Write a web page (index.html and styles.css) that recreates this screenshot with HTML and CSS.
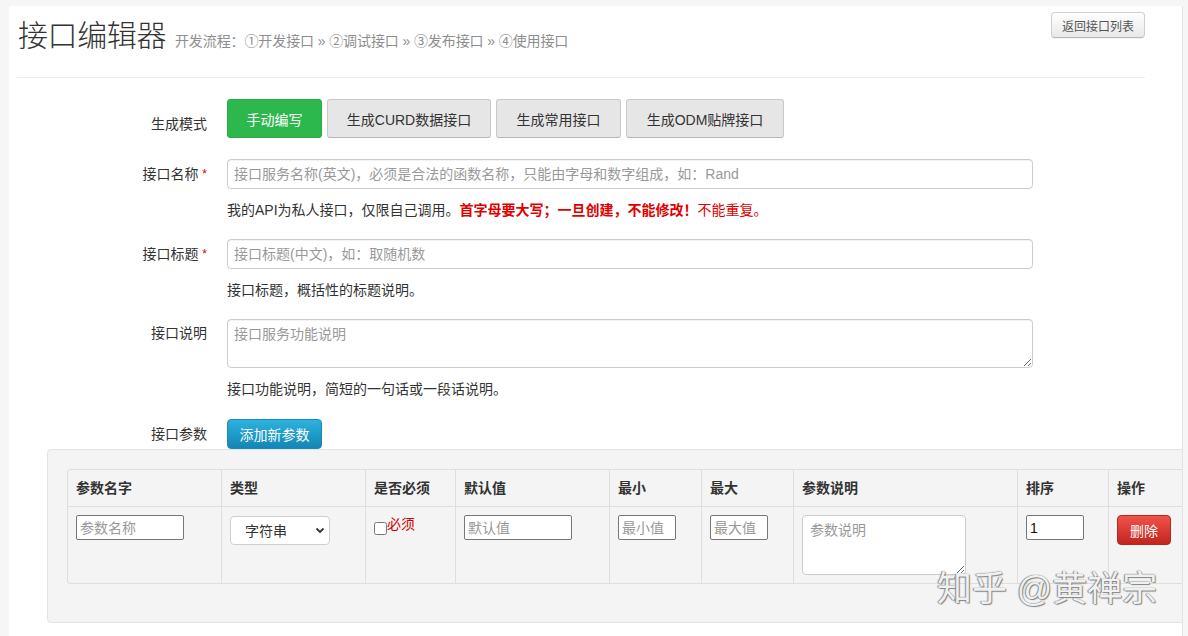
FILE: index.html
```html
<!DOCTYPE html>
<html lang="zh-CN">
<head>
<meta charset="utf-8">
<title>接口编辑器</title>
<link rel="stylesheet" href="styles.css">
</head>
<body>
<div class="page">
  <div class="container">
    <div class="header">
      <h1 class="title">接口编辑器 <small class="subtitle">开发流程：①开发接口 » ②调试接口 » ③发布接口 » ④使用接口</small></h1>
      <button class="btn-back">返回接口列表</button>
    </div>

    <div class="form">
      <div class="row row-mode">
        <div class="label label-mode">生成模式</div>
        <div class="controls btn-group">
          <button class="btn btn-green">手动编写</button>
          <button class="btn btn-gray">生成CURD数据接口</button>
          <button class="btn btn-gray">生成常用接口</button>
          <button class="btn btn-gray">生成ODM贴牌接口</button>
        </div>
      </div>

      <div class="row row-field">
        <div class="label">接口名称 <span class="req">*</span></div>
        <div class="controls">
          <input class="text-input" type="text" placeholder="接口服务名称(英文)，必须是合法的函数名称，只能由字母和数字组成，如：Rand">
          <p class="help">我的API为私人接口，仅限自己调用。<b class="warn">首字母要大写；一旦创建，不能修改！</b><span class="warn-light">不能重复。</span></p>
        </div>
      </div>

      <div class="row row-field">
        <div class="label">接口标题 <span class="req">*</span></div>
        <div class="controls">
          <input class="text-input" type="text" placeholder="接口标题(中文)，如：取随机数">
          <p class="help">接口标题，概括性的标题说明。</p>
        </div>
      </div>

      <div class="row row-area">
        <div class="label">接口说明</div>
        <div class="controls">
          <textarea class="text-area" placeholder="接口服务功能说明"></textarea>
          <p class="help">接口功能说明，简短的一句话或一段话说明。</p>
        </div>
      </div>

      <div class="row row-param">
        <div class="label">接口参数</div>
        <div class="controls">
          <button class="btn btn-blue">添加新参数</button>
        </div>
      </div>

      <div class="well">
        <table class="param-table">
          <colgroup>
            <col class="c1"><col class="c2"><col class="c3"><col class="c4"><col class="c5"><col class="c6"><col class="c7"><col class="c8"><col class="c9">
          </colgroup>
          <thead>
            <tr>
              <th>参数名字</th><th>类型</th><th>是否必须</th><th>默认值</th><th>最小</th><th>最大</th><th>参数说明</th><th>排序</th><th>操作</th>
            </tr>
          </thead>
          <tbody>
            <tr>
              <td><input class="cell-input w-wide" type="text" placeholder="参数名称"></td>
              <td>
                <div class="select-wrap">
                  <select class="cell-select"><option>字符串</option></select>
                  <svg class="chev" width="10" height="7" viewBox="0 0 10 7"><path d="M1.5 1.5 L5 5 L8.5 1.5" fill="none" stroke="#333" stroke-width="1.8"/></svg>
                </div>
              </td>
              <td><label class="check"><input type="checkbox" class="cb"><span class="must">必须</span></label></td>
              <td><input class="cell-input w-wide" type="text" placeholder="默认值"></td>
              <td><input class="cell-input w-small" type="text" placeholder="最小值"></td>
              <td><input class="cell-input w-small" type="text" placeholder="最大值"></td>
              <td><textarea class="cell-area" placeholder="参数说明"></textarea></td>
              <td><input class="cell-input w-small" type="text" value="1"></td>
              <td><button class="btn-danger">删除</button></td>
            </tr>
          </tbody>
        </table>
      </div>
    </div>
  </div>
</div>
<div class="watermark">知乎 @黄禅宗</div>
</body>
</html>
```
FILE: styles.css
```css
html, body {
  margin: 0;
  padding: 0;
}
body {
  background: #f6f6f6;
  font-family: "Liberation Sans", "Noto Sans CJK SC", sans-serif;
  font-size: 14px;
  color: #333;
  width: 1188px;
  height: 636px;
  overflow: hidden;
  position: relative;
}
.page {
  margin: 6px 5px 0 9px;
  background: #fff;
  height: 640px;
  overflow: hidden;
  border-right: 1px solid #e2e2e2;
  padding-left: 8px;
  box-sizing: border-box;
}
.container {
  width: 1128px;
}
.header {
  display: flex;
  justify-content: space-between;
  align-items: flex-start;
  height: 72px;
  border-bottom: 1px solid #ececec;
  box-sizing: border-box;
}
.title {
  margin: 10px 0 0 1px;
  font-size: 30px;
  line-height: 40px;
  font-weight: 300;
  color: #333;
  letter-spacing: -0.4px;
}
.subtitle {
  font-size: 14px;
  color: #8e8e8e;
  font-weight: 400;
  letter-spacing: -0.1px;
  margin-left: 1px;
}
.btn-back {
  margin-top: 6px;
  width: 94px;
  height: 26px;
  font-family: inherit;
  font-size: 12px;
  color: #555;
  background: linear-gradient(#ffffff, #e8e8e8);
  border: 1px solid #cfcfcf;
  border-bottom-color: #b8b8b8;
  border-radius: 4px;
  box-shadow: 0 1px 1px rgba(0,0,0,0.06);
  padding: 0;
}
.form {
  margin-left: 30px;
  padding-top: 21px;
}
.row {
  display: flex;
  align-items: flex-start;
}
.label {
  width: 160px;
  text-align: right;
  line-height: 20px;
  padding-top: 5px;
  color: #333;
  flex: none;
}
.label-mode {
  padding-top: 15px;
}
.req {
  color: #d40000;
  font-size: 12px;
  vertical-align: top;
}
.controls {
  margin-left: 20px;
}
.row-mode { margin-bottom: 21px; }
.row-field { margin-bottom: 19px; }
.row-area { margin-bottom: 20px; }
.row-area .label { padding-top: 4px; }

.btn-group {
  display: flex;
  gap: 5px;
}
.btn {
  font-family: inherit;
  font-size: 14px;
  height: 39px;
  padding: 0 20px;
  border-radius: 3px;
  cursor: pointer;
}
.btn-green {
  width: 95px;
  padding: 0;
  background: #2db84d;
  border: 1px solid #28ad47;
  color: #fff;
}
.btn-gray {
  background: #e6e6e6;
  border: 1px solid #c9c9c9;
  border-bottom-color: #b5b5b5;
  color: #333;
}
.btn-gray:nth-child(2) { width: 164px; padding: 0; }
.btn-gray:nth-child(3) { width: 125px; padding: 0; }
.btn-gray:nth-child(4) { width: 158px; padding: 0; }
.btn-blue {
  width: 95px;
  height: 30px;
  padding: 0;
  color: #fff;
  background: linear-gradient(#2cb2df, #1386b4);
  border: 1px solid #1a8ab6;
  border-radius: 4px;
}
.text-input {
  display: block;
  width: 806px;
  height: 30px;
  box-sizing: border-box;
  border: 1px solid #cccccc;
  border-radius: 4px;
  padding: 0 6px;
  font-family: inherit;
  font-size: 14px;
  color: #333;
  box-shadow: inset 0 1px 1px rgba(0,0,0,0.05);
}
.text-area {
  display: block;
  width: 806px;
  height: 49px;
  box-sizing: border-box;
  border: 1px solid #cccccc;
  border-radius: 4px;
  padding: 4px 6px;
  font-family: inherit;
  font-size: 14px;
  line-height: 20px;
  resize: vertical;
  box-shadow: inset 0 1px 1px rgba(0,0,0,0.05);
}
::placeholder {
  color: #999;
}
.help {
  margin: 11px 0 0;
  line-height: 20px;
  color: #333;
}
.warn {
  color: #e00000;
  font-weight: bold;
}
.warn-light {
  color: #e00000;
}

.well {
  width: 1160px;
  background: #f4f4f4;
  border: 1px solid #e2e2e2;
  border-radius: 4px;
  padding: 19px 19px 38px;
  box-sizing: border-box;
}
.param-table {
  table-layout: fixed;
  width: 1141px;
  border-collapse: separate;
  border-spacing: 0;
  border: 1px solid #dedede;
  border-right: none;
  border-radius: 4px 0 0 4px;
}
.c1 { width: 153px; }
.c2 { width: 144px; }
.c3 { width: 90px; }
.c4 { width: 154px; }
.c5 { width: 92px; }
.c6 { width: 92px; }
.c7 { width: 224px; }
.c8 { width: 91px; }
.c9 { width: 100px; }
.param-table th,
.param-table td {
  padding: 8px;
  text-align: left;
  vertical-align: top;
  line-height: 20px;
  border-left: 1px solid #dedede;
}
.param-table th:first-child,
.param-table td:first-child {
  border-left: none;
}
.param-table th {
  font-weight: bold;
  color: #333;
}
.param-table td {
  border-top: 1px solid #dedede;
}
.cell-input {
  display: block;
  height: 25px;
  box-sizing: border-box;
  border: 1px solid #767676;
  border-radius: 2px;
  padding: 0 3px;
  font-family: inherit;
  font-size: 14px;
  color: #111;
  background: #fff;
}
.w-wide { width: 108px; }
.w-small { width: 58px; }
.select-wrap {
  position: relative;
  width: 100px;
  margin-top: 1px;
}
.cell-select {
  display: block;
  appearance: none;
  -webkit-appearance: none;
  width: 100px;
  height: 29px;
  box-sizing: border-box;
  border: 1px solid #cfcfcf;
  border-radius: 4px;
  background: #fff;
  padding: 0 0 0 14px;
  font-family: inherit;
  font-size: 14px;
  color: #333;
}
.chev {
  position: absolute;
  right: 5px;
  top: 11px;
}
.check {
  display: flex;
  align-items: flex-start;
}
.cb {
  margin: 7px 0 0;
  width: 13px;
  height: 13px;
}
.must {
  color: #d40000;
  line-height: 20px;
  margin-top: -1px;
}
.cell-area {
  display: block;
  width: 164px;
  height: 60px;
  box-sizing: border-box;
  border: 1px solid #cccccc;
  border-radius: 4px;
  padding: 4px 7px;
  font-family: inherit;
  font-size: 14px;
  line-height: 20px;
  background: #fff;
}
.btn-danger {
  width: 54px;
  height: 30px;
  padding: 0;
  font-family: inherit;
  font-size: 14px;
  color: #fff;
  background: linear-gradient(#f0524c, #c4241e);
  border: 1px solid #b82621;
  border-radius: 4px;
}
.watermark {
  position: absolute;
  left: 937px;
  top: 568px;
  font-size: 35px;
  line-height: 42px;
  color: rgba(255,255,255,0.92);
  letter-spacing: 0;
  text-shadow: 0 0 1px #666, 1px 1px 1px #888, -1px 0 1px #999;
  white-space: nowrap;
}
```
